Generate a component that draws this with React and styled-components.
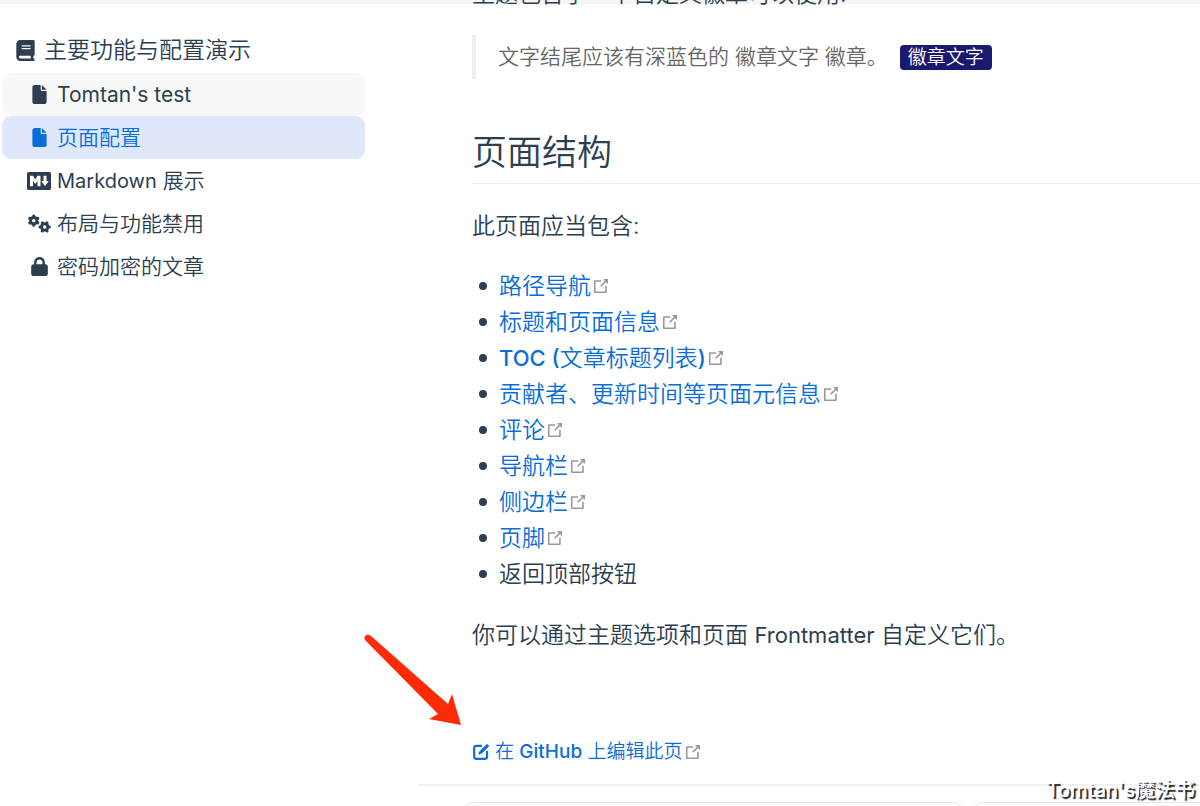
import React from 'react';
import styled, { createGlobalStyle } from 'styled-components';
import { FaBook, FaFile, FaGears, FaLock } from 'react-icons/fa6';
import { IoLogoMarkdown } from 'react-icons/io5';

const GlobalStyle = createGlobalStyle`
  *, *::before, *::after { box-sizing: border-box; }
  body {
    margin: 0;
    background: #fff;
    color: #2c3e50;
    font-family: Inter, "Noto Sans CJK SC", sans-serif;
    font-weight: 330;
    line-height: 1.5;
  }
  a { color: inherit; text-decoration: none; }
`;

const Page = styled.div`
  position: relative;
  display: flex;
  height: 100vh;
  overflow: hidden;
  padding-top: 4px;
  background: linear-gradient(#f5f5f5 4px, #fff 4px);
`;

const Sidebar = styled.nav`
  flex: 0 0 418px;
  padding: 24px 53px 0 2px;
`;

const SidebarHeading = styled.p`
  display: flex;
  align-items: center;
  gap: 8px;
  margin: 0 0 1px;
  padding-left: 13px;
  height: 44px;
  font-size: 23px;
`;

const SidebarList = styled.ul`
  list-style: none;
  margin: 0;
  padding: 0;
`;

const SidebarLink = styled.a`
  display: flex;
  align-items: center;
  gap: 6px;
  height: 43px;
  padding-left: 25px;
  border-radius: 9px;
  font-size: 21px;
  font-weight: ${(p) => (p.$latin ? 400 : 330)};
  color: ${(p) => (p.$active ? '#096dd9' : 'inherit')};
  background: ${(p) => (p.$active ? '#dfe8fa' : p.$hover ? '#f8f8f8' : 'transparent')};
`;

const IconSlot = styled.span`
  display: flex;
  justify-content: center;
  width: 24px;
`;

const Latin = styled.span`
  font-size: ${(p) => p.$size};
  font-weight: ${(p) => (p.$strong ? 500 : 400)};
`;

const Main = styled.main`
  flex: 1;
  min-width: 0;
`;

const Article = styled.article`
  padding-left: 54px;
`;

const Paragraph = styled.p`
  margin: 0;
  font-size: 23px;
  line-height: 36px;
`;

const Intro = styled(Paragraph)`
  margin-top: -28px;
`;

const Quote = styled.blockquote`
  display: flex;
  align-items: center;
  gap: 12px;
  height: 44px;
  margin: 23px 0 0;
  padding-left: 22px;
  border-left: 4px solid #eee;
  color: #666;
  font-size: 21px;
`;

const Badge = styled.span`
  padding: 0 8px;
  border-radius: 4px;
  background: #191970;
  color: #fff;
  font-size: 19px;
  line-height: 25px;
`;

const SectionTitle = styled.h2`
  margin: 46px 0 0;
  padding-bottom: 4px;
  border-bottom: 1px solid #eaecef;
  font-size: 35px;
  font-weight: 350;
  line-height: 54px;
`;

const Lead = styled(Paragraph)`
  margin-top: 24px;
`;

const FeatureList = styled.ul`
  list-style: none;
  margin: 24px 0 25px;
  padding: 0 0 0 7px;
`;

const Feature = styled.li`
  display: flex;
  align-items: center;
  height: 36px;
  font-size: 23px;
  &::before {
    content: '';
    width: 8px;
    height: 8px;
    margin-right: 12px;
    border-radius: 50%;
    background: #2c3e50;
  }
`;

const OuterLink = styled.a`
  display: inline-flex;
  align-items: center;
  color: #096dd9;
`;

const EditRow = styled.div`
  position: relative;
  display: flex;
  align-items: center;
  height: 30px;
  margin-top: 84px;
  font-size: 19px;
  svg.pen { margin-right: 5px; }
`;

const Arrow = styled.svg`
  position: absolute;
  left: -112px;
  bottom: 42px;
`;

const PageNav = styled.nav`
  display: flex;
  gap: 12px;
  margin-top: 17px;
  padding: 16px 0 0 47px;
  border-top: 2px solid #f1f1f2;
`;

const NavCard = styled.a`
  flex: 0 0 auto;
  width: calc(68% - 3px);
  height: 60px;
  border: 1px solid #e5e5e5;
  border-radius: 8px;
`;

const Watermark = styled.span`
  position: absolute;
  right: 5px;
  bottom: 3px;
  color: #fff;
  font-size: 20px;
  font-weight: 500;
  line-height: 26px;
  text-shadow: 2px 2px 1px #222;
`;

function ExternalIcon() {
  return (
    <svg width="20" height="20" viewBox="0 0 100 100" fill="#999" aria-hidden="true">
      <path d="M18.8,85.1h56l0,0c2.2,0,4-1.8,4-4v-32h-8v28h-48v-48h28v-8h-32l0,0c-2.2,0-4,1.8-4,4v56C14.8,83.3,16.6,85.1,18.8,85.1z" />
      <path d="M45.7,48.7 51.3,54.3 77.2,28.5 77.2,37.2 85.2,37.2 85.2,14.9 62.8,14.9 62.8,22.9 71.5,22.9z" />
    </svg>
  );
}

function PenIcon() {
  return (
    <svg className="pen" width="18" height="18" viewBox="0 0 1024 1024" fill="currentColor" aria-hidden="true">
      <path d="M430.818 653.65a60.46 60.46 0 0 1-50.96-93.281l71.69-114.012 7.773-10.365L816.038 80.138A60.46 60.46 0 0 1 859.225 62a60.46 60.46 0 0 1 43.186 18.138l43.186 43.186a60.46 60.46 0 0 1 0 86.373L588.879 565.55l-8.637 8.637-117.466 68.234a60.46 60.46 0 0 1-31.958 11.229z" />
      <path d="M728.802 962H252.891A190.883 190.883 0 0 1 62.008 771.98V296.934a190.883 190.883 0 0 1 190.883-192.61h267.754a60.46 60.46 0 0 1 0 120.92H252.891a69.962 69.962 0 0 0-69.098 69.099V771.98a69.962 69.962 0 0 0 69.098 69.098h475.911A69.962 69.962 0 0 0 797.9 771.98V503.363a60.46 60.46 0 1 1 120.922 0V771.98A190.883 190.883 0 0 1 728.802 962z" />
    </svg>
  );
}

const pages = [
  { label: "Tomtan's test", icon: <FaFile size={19} />, hover: true, latin: true },
  { label: '页面配置', icon: <FaFile size={19} />, active: true },
  { label: <><Latin $size="20px">Markdown</Latin> 展示</>, icon: <IoLogoMarkdown size={24} /> },
  { label: '布局与功能禁用', icon: <FaGears size={23} /> },
  { label: '密码加密的文章', icon: <FaLock size={19} /> },
];

const features = [
  '路径导航',
  '标题和页面信息',
  <><Latin $size="22px" $strong>TOC (</Latin>文章标题列表<Latin $size="22px" $strong>)</Latin></>,
  '贡献者、更新时间等页面元信息',
  '评论',
  '导航栏',
  '侧边栏',
  '页脚',
];

export default function App() {
  return (
    <Page>
      <GlobalStyle />
      <Sidebar>
        <SidebarHeading><FaBook size={21} />主要功能与配置演示</SidebarHeading>
        <SidebarList>
          {pages.map((p, i) => (
            <li key={i}>
              <SidebarLink href="#" $active={p.active} $hover={p.hover} $latin={p.latin}>
                <IconSlot>{p.icon}</IconSlot>
                <span>{p.label}</span>
              </SidebarLink>
            </li>
          ))}
        </SidebarList>
      </Sidebar>
      <Main>
        <Article>
          <Intro>主题包含了一个自定义徽章可以使用:</Intro>
          <Quote>
            <span>文字结尾应该有深蓝色的 徽章文字 徽章。</span>
            <Badge>徽章文字</Badge>
          </Quote>
          <SectionTitle>页面结构</SectionTitle>
          <Lead>此页面应当包含:</Lead>
          <FeatureList>
            {features.map((f, i) => (
              <Feature key={i}>
                <OuterLink href="#"><span>{f}</span><ExternalIcon /></OuterLink>
              </Feature>
            ))}
            <Feature>返回顶部按钮</Feature>
          </FeatureList>
          <Paragraph>你可以通过主题选项和页面 <Latin $size="22px">Frontmatter</Latin> 自定义它们。</Paragraph>
          <EditRow>
            <Arrow width="102" height="96" viewBox="0 0 102 96" aria-hidden="true">
              <path d="M5 11C3 7 7 4 11 7L88 75L92 65L101 96L69 90L78 85Z" fill="#ff2b06" />
            </Arrow>
            <OuterLink href="#">
              <PenIcon />
              <span>在 <Latin $size="19px" $strong>GitHub</Latin> 上编辑此页</span>
              <ExternalIcon />
            </OuterLink>
          </EditRow>
        </Article>
        <PageNav aria-label="翻页">
          <NavCard href="#" />
          <NavCard href="#" />
        </PageNav>
      </Main>
      <Watermark>Tomtan's魔法书</Watermark>
    </Page>
  );
}
